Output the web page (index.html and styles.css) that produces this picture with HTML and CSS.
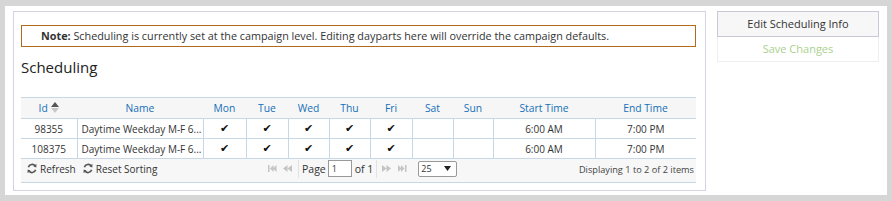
FILE: index.html
```html
<!DOCTYPE html>
<html>
<head>
<meta charset="utf-8">
<link rel="stylesheet" href="styles.css">
</head>
<body>
<div class="page">
  <div class="panel">
    <div class="note"><b>Note:</b> Scheduling is currently set at the campaign level. Editing dayparts here will override the campaign defaults.</div>
    <h2 class="title">Scheduling</h2>
    <div class="grid">
      <table>
        <colgroup>
          <col style="width:56px"><col style="width:126px"><col style="width:43px"><col style="width:42px"><col style="width:41px"><col style="width:41px"><col style="width:42px"><col style="width:41px"><col style="width:40px"><col style="width:102px"><col>
        </colgroup>
        <thead>
          <tr>
            <th>Id <span class="sort"><svg width="8" height="11" viewBox="0 0 8 11"><path d="M0 5 L4 0 L8 5 Z" fill="#555"/><path d="M0 6 L4 11 L8 6 Z" fill="#c8c8c8"/></svg></span></th>
            <th>Name</th><th>Mon</th><th>Tue</th><th>Wed</th><th>Thu</th><th>Fri</th><th>Sat</th><th>Sun</th><th>Start Time</th><th>End Time</th>
          </tr>
        </thead>
        <tbody>
          <tr>
            <td>98355</td><td class="name">Daytime Weekday M-F 6...</td><td class="chk">✔</td><td class="chk">✔</td><td class="chk">✔</td><td class="chk">✔</td><td class="chk">✔</td><td></td><td></td><td>6:00 AM</td><td>7:00 PM</td>
          </tr>
          <tr>
            <td>108375</td><td class="name">Daytime Weekday M-F 6...</td><td class="chk">✔</td><td class="chk">✔</td><td class="chk">✔</td><td class="chk">✔</td><td class="chk">✔</td><td></td><td></td><td>6:00 AM</td><td>7:00 PM</td>
          </tr>
        </tbody>
      </table>
      <div class="footer">
        <div class="tools">
          <span class="tool"><svg width="10" height="11" viewBox="0 0 10 11"><path d="M8.3 3.2 A3.8 3.8 0 0 0 1.4 4.3" fill="none" stroke="#555" stroke-width="1.6"/><path d="M6.5 3.6 L9.4 4.4 L9.4 0.8 Z" fill="#555"/><path d="M1.7 7.8 A3.8 3.8 0 0 0 8.6 6.7" fill="none" stroke="#555" stroke-width="1.6"/><path d="M3.5 7.4 L0.6 6.6 L0.6 10.2 Z" fill="#555"/></svg>Refresh</span>
          <span class="tool"><svg width="10" height="11" viewBox="0 0 10 11"><path d="M8.3 3.2 A3.8 3.8 0 0 0 1.4 4.3" fill="none" stroke="#555" stroke-width="1.6"/><path d="M6.5 3.6 L9.4 4.4 L9.4 0.8 Z" fill="#555"/><path d="M1.7 7.8 A3.8 3.8 0 0 0 8.6 6.7" fill="none" stroke="#555" stroke-width="1.6"/><path d="M3.5 7.4 L0.6 6.6 L0.6 10.2 Z" fill="#555"/></svg>Reset Sorting</span>
        </div>
        <div class="pager">
          <svg class="pg" width="9" height="7" viewBox="0 0 9 7"><rect x="0" y="0" width="1.5" height="7" fill="#c4c4c4"/><path d="M2 3.5 L5.5 0 L5.5 7 Z M5 3.5 L8.5 0 L8.5 7 Z" fill="#c4c4c4"/></svg>
          <svg class="pg" width="10" height="7" viewBox="0 0 10 7"><path d="M0 3.5 L4.5 0 L4.5 7 Z M4.5 3.5 L9 0 L9 7 Z" fill="#c4c4c4"/></svg>
          <span class="sep"></span>
          <span class="lbl">Page</span><span class="pinput">1</span><span class="lbl of">of 1</span>
          <span class="sep"></span>
          <svg class="pg" width="10" height="7" viewBox="0 0 10 7"><path d="M0 0 L4.5 3.5 L0 7 Z M4.5 0 L9 3.5 L4.5 7 Z" fill="#c4c4c4"/></svg>
          <svg class="pg" width="9" height="7" viewBox="0 0 9 7"><path d="M0 0 L3.5 3.5 L0 7 Z M3 0 L6.5 3.5 L3 7 Z" fill="#c4c4c4"/><rect x="7" y="0" width="1.5" height="7" fill="#c4c4c4"/></svg>
          <span class="psel"><span>25</span><svg width="7" height="5" viewBox="0 0 7 5"><path d="M0 0 L7 0 L3.5 5 Z" fill="#222"/></svg></span>
        </div>
        <div class="info">Displaying 1 to 2 of 2 items</div>
      </div>
    </div>
  </div>
  <div class="side">
    <div class="btn edit">Edit Scheduling Info</div>
    <div class="btn save">Save Changes</div>
  </div>
</div>
</body>
</html>
```
FILE: styles.css
```css
html, body {
  margin: 0;
  padding: 0;
  background: #d6d6d6;
  font-family: "Open Sans", "Liberation Sans", sans-serif;
  color: #333;
}
.page {
  margin: 6px 5px 0 5px;
  width: 882px;
  height: 189px;
  background: #fff;
  box-sizing: border-box;
  padding: 5px 0 0 8px;
  display: flex;
  align-items: flex-start;
  gap: 11px;
}
.panel {
  width: 693px;
  height: 180px;
  box-sizing: border-box;
  border: 1px solid #d4d4e0;
  padding: 13px 9px 0 7px;
}
.note {
  height: 22px;
  box-sizing: border-box;
  border: 1px solid #b06a1c;
  font-size: 10.8px;
  line-height: 20px;
  padding-left: 19px;
  color: #333;
  white-space: nowrap;
}
.note b { font-weight: 700; }
.title {
  margin: 0;
  font-size: 15px;
  font-weight: 400;
  color: #222;
  height: 50px;
  line-height: 40px;
  padding-top: 0;
}
.grid {
  width: 675px;
}
table {
  width: 675px;
  border-collapse: collapse;
  table-layout: fixed;
  font-size: 10px;
}
thead th {
  background: #f6f6f6;
  color: #1470b9;
  font-weight: 400;
  font-size: 10.3px;
  height: 20px;
  padding: 0;
  border-top: 1px solid #c8d7e6;
  border-bottom: 1px solid #c8d7e6;
  text-align: center;
  white-space: nowrap;
}
.sort { display: inline-block; vertical-align: -1px; margin-left: 1px; }
.sort svg { display: block; }
tbody td {
  height: 19px;
  padding: 0;
  border: 1px solid #c8d7e6;
  border-top: 0;
  text-align: center;
  color: #333;
  white-space: nowrap;
  overflow: hidden;
  font-size: 10px;
}
tbody td:first-child { border-left: 0; }
tbody td:last-child { border-right: 0; }
tbody td.name { text-align: left; padding-left: 4px; }
tbody td.chk { font-family: "DejaVu Sans", sans-serif; font-size: 11px; color: #111; }
.footer {
  height: 23px;
  box-sizing: content-box;
  background: #f7f7f7;
  border-bottom: 1px solid #c8d7e6;
  display: flex;
  align-items: flex-start;
  padding-top: 0;
  font-size: 10px;
  color: #333;
}
.tools {
  display: flex;
  gap: 7px;
  padding-left: 6px;
  width: 238px;
  height: 19px;
  align-items: center;
}
.tool { display: flex; align-items: center; gap: 3px; }
.pager {
  display: flex;
  align-items: center;
  gap: 0;
  height: 19px;
}
.pg { margin: 0 3px; }
.sep {
  width: 1px;
  height: 18px;
  background: #e2e2e2;
  margin: 0 2px;
}
.lbl { margin: 0 2px 0 1px; font-size: 10.5px; }
.lbl.of { margin-left: 3px; margin-right: 1px; }
.pinput {
  width: 24px;
  height: 17px;
  box-sizing: border-box;
  border: 1px solid #999;
  background: #fff;
  font-size: 9px;
  line-height: 15px;
  padding-left: 3px;
}
.psel {
  margin-left: 8px;
  width: 39px;
  height: 16px;
  box-sizing: border-box;
  border: 1px solid #999;
  border-radius: 2px;
  background: #fff;
  display: flex;
  align-items: center;
  justify-content: space-between;
  padding: 0 5px 0 2px;
  font-size: 9px;
}
.info {
  margin-left: auto;
  padding-right: 2px;
  color: #444;
  font-size: 9.2px;
  line-height: 21px;
}
.side {
  width: 162px;
  display: flex;
  flex-direction: column;
}
.btn {
  box-sizing: border-box;
  text-align: center;
  font-size: 11px;
}
.edit {
  height: 26px;
  line-height: 24px;
  background: #f7f7f7;
  border: 1px solid #c8c8d6;
  color: #333;
}
.save {
  height: 25px;
  line-height: 24px;
  border: 1px solid #efefef;
  border-top: 0;
  color: #a9d18e;
}
```
